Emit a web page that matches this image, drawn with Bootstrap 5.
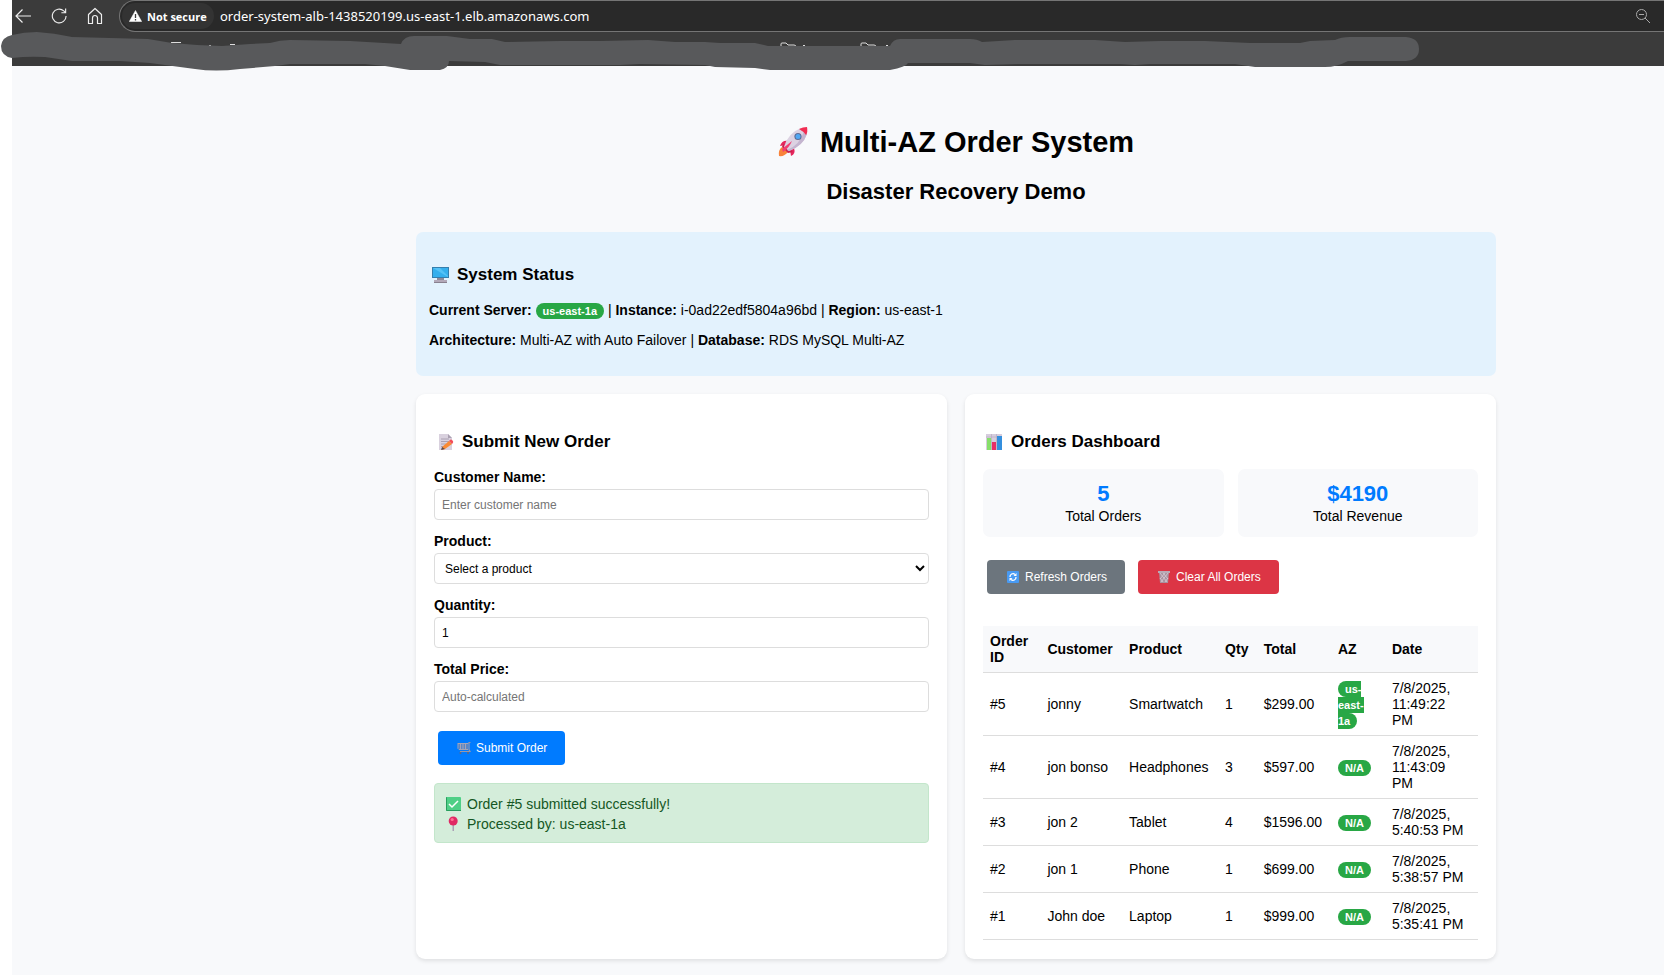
<!DOCTYPE html>
<html lang="en">
<head>
<meta charset="utf-8">
<meta name="viewport" content="width=device-width, initial-scale=1">
<title>Multi-AZ Order System</title>
<link href="https://cdn.jsdelivr.net/npm/bootstrap@5.3.0/dist/css/bootstrap.min.css" rel="stylesheet">
<style>
  body { font-family: "Liberation Sans", Arial, sans-serif; font-size: 14px; line-height: 17px; color: #000; background: #fff; overflow-x: hidden; }
  .window-area { margin-left: 12px; }
  h1, h2, h3 { font-weight: 700; margin: 0; }
  h1 { font-size: 29px; line-height: 34px; gap: 12px; }
  h2 { font-size: 22px; line-height: 25px; margin-top: 20px; }
  h3 { font-size: 17px; line-height: 20px; gap: 4px; }
  svg { flex: none; }

  /* browser bar */
  .browser-bar { background: #3b3b3b; height: 66px; font-family: "Open Sans", "Noto Sans", sans-serif; }
  .tool-buttons { width: 107px; padding-left: 2px; gap: 19px; height: 32px; }
  .tool-buttons button, .address-bar button { background: none; border: 0; padding: 0; display: flex; color: #fff; }
  .address-bar { background: #292929; border: 1px solid #757575; border-right: 0; border-radius: 16px 0 0 16px; height: 32px; padding: 0 13px 0 2px; }
  .address-bar .secure-chip { background: #333; border-radius: 13px; height: 26px; width: 92px; padding-left: 7px; gap: 5px; align-items: center; font-size: 11px; font-weight: 700; white-space: nowrap; }
  .address-bar input { background: none; border: 0; padding: 0 0 0 6px; color: #fff; font-family: "Noto Sans", sans-serif; font-size: 13px; outline: 0; min-width: 0; }
  .redaction { position: absolute; left: 0; top: 0; pointer-events: none; }

  /* page */
  .page-area { background: #f8f9fb; padding: 59px 0 15px; min-height: calc(100vh - 66px); }
  .space-start { flex: 101 1 0; }
  .space-end { flex: 42 1 0; }
  .order-app { flex: 0 1 1080px; min-width: 0; }
  .status-panel { background: #e3f2fd; border-radius: 7px; padding: 33px 13px 27px; margin: 28px 0 18px; }
  .status-panel p { margin: 0; padding-top: 13px; }
  .status-panel h3 { margin-bottom: 4px; }
  .panels { display: grid; grid-template-columns: 1fr 1fr; gap: 18px; }
  .panel { background: #fff; border-radius: 9px; padding: 38px 18px 19px; box-shadow: 0 2px 4px rgba(0,0,0,.1); min-width: 0; }
  .panel h3 { margin-bottom: 17px; }
  .az-pill { background: #28a745; color: #fff; border-radius: 11px; padding: 2px 7px; font-size: 11px; line-height: 11px; font-weight: 700; }

  .field { margin-bottom: 13px; }
  .field label { display: block; font-weight: 700; margin-bottom: 3px; }
  .field .form-control, .field .form-box { display: block; width: 100%; height: 31px; border: 1px solid #ddd; border-radius: 4px; padding: 7px; font-size: 12px; line-height: 15px; color: #000; background: #fff; }
  .field .form-box { padding: 6px; }
  .field .form-control::placeholder { color: #757575; }
  .action { border: 0; border-radius: 4px; color: #fff; font-size: 12px; line-height: 14px; padding: 10px 18px; display: inline-flex; align-items: center; gap: 4px; margin: 6px 4px 18px; }
  .action-blue { background: #007bff; }
  .action-gray { background: #6c757d; }
  .action-red { background: #dc3545; }
  .done-note { background: #d4edda; border: 1px solid #c3e6cb; border-radius: 4px; color: #155724; padding: 10px 9px 8px; line-height: 20px; margin: 0; }
  .done-note div { gap: 5px; }

  .stat-row { gap: 14px; }
  .stat-tile { background: #f8f9fb; border-radius: 7px; padding: 13px 14px 12px; text-align: center; flex: 1 1 0; }
  .stat-tile b { display: block; font-size: 22px; line-height: 24px; margin-bottom: 2px; color: #007bff; }
  .dash-actions { margin: 23px 0 32px; gap: 5px; }
  .dash-actions .action { margin: 0 4px; }

  .orders { width: 100%; table-layout: fixed; border-collapse: collapse; line-height: 16px; }
  .orders th, .orders td { padding: 7px; border-bottom: 1px solid #ddd; vertical-align: middle; }
  .orders th { background: #f8f9fb; }
  .orders .c-id { width: 11.6%; } .orders .c-name { width: 16.5%; } .orders .c-prod { width: 19.4%; }
  .orders .c-qty { width: 7.8%; } .orders .c-total { width: 15%; } .orders .c-az { width: 10.9%; }
  .orders td:last-child { padding-right: 12px; }
</style>
</head>
<body>
<div class="window-area">
  <header class="browser-bar">
    <div class="d-flex">
      <div class="tool-buttons d-flex align-items-center">
        <button aria-label="Back"><svg width="18" height="18" viewBox="0 0 18 18" fill="none" stroke="#eee" stroke-width="1.2"><path d="M17 9H2M8.500 2.500 2 9l6.500 6.500"/></svg></button>
        <button aria-label="Reload"><svg width="17" height="18" viewBox="0 0 18 18" fill="none" stroke="#eee" stroke-width="1.2"><path d="M16 9a7.300 7.300 0 1 1-2.500-5.500L15.500 5.500M15.500 1v4.500H11"/></svg></button>
        <button aria-label="Home"><svg width="16" height="18" viewBox="0 0 16 18" fill="none" stroke="#eee" stroke-width="1.2"><path d="M1.500 7.500 8 1.500l6.500 6v9H10.500V11a2.500 2.500 0 0 0-5 0v5.500h-4z" stroke-linejoin="round"/></svg></button>
      </div>
      <div class="address-bar d-flex align-items-center flex-grow-1">
        <button class="secure-chip d-flex"><svg width="13" height="12" viewBox="0 0 13 12"><path d="M6.500.5 12.700 11.500H.3z" fill="#fff" stroke="#fff" stroke-width=".5" stroke-linejoin="round"/><path d="M6.500 4v4M6.500 9v1.400" stroke="#3b3b3b" stroke-width="1.300"/></svg>Not secure</button>
        <input class="flex-grow-1" type="text" aria-label="Address" value="order-system-alb-1438520199.us-east-1.elb.amazonaws.com">
        <button aria-label="Zoom out"><svg width="16" height="16" viewBox="0 0 16 16" fill="none" stroke="#aaa"><circle cx="6.500" cy="6.500" r="5"/><path d="M10 10l5 5M4 6.500h5"/></svg></button>
      </div>
    </div>
    <!-- grey marker strokes hiding the bookmarks row -->
    <svg class="redaction" width="1424" height="76" viewBox="0 0 1424 76">
      <path d="M171 42.500h10M209 45.500h2M230 44.500h5M723 43.500h5M1254 43.500h4M803 45.500h2M886 45.500h2" stroke="#ddd" fill="none"/>
      <path d="M781 47v-3q0-1 1-1h4l2 2h6q2 0 2 2M861 47v-3q0-1 1-1h4l2 2h6q2 0 2 2" stroke="#ddd" fill="none"/>
      <path fill="#58595b" d="M12 35Q24 32 37 32Q54 33 72 37L110 38L148 39L172 43L197 45L222 46L250 44L270 43Q280 40 290 40L350 41L401 44Q404 36 414 36L447 36L470 39L492 39L505 42L560 41L600 41L648 40L675 42L705 42L720 43L755 43L768 46L890 46Q893 39 900 39L970 39Q977 39 982 42L1015 40L1095 40L1125 42L1160 41L1205 41L1250 43L1300 43L1310 41L1335 40Q1341 37 1350 37L1406 37Q1419 38 1419 49Q1419 60 1406 61L1348 61Q1337 67 1325 67L1255 67L1235 64L1150 64L1135 65L1120 64L1020 64L985 65L970 63L908 63Q906 67 890 70L770 70L755 68L715 67L705 65L640 64L620 65L500 65L485 62L449 61Q449 68 440 70L410 70L385 66L365 64L290 64L275 66L240 69Q215 72 195 69L150 63L120 61L72 61L45 57Q28 56 12 58Q1 56 1 46Q2 37 12 35Z"/>
    </svg>
  </header>

  <main class="page-area d-flex">
    <div class="space-start"></div>
    <div class="order-app">
      <h1 class="d-flex justify-content-center align-items-center">
        <svg width="30" height="30" viewBox="0 0 30 30"><path d="M4 20q-4 3-3 9 5 1 9-4z" fill="#f9833a"/><path d="M10 14q-6-1-8 5l6-1zM16 21q2 6-3 8l-1-6z" fill="#e5265c"/><path d="M5 17 15 25 10 26 4 20z" fill="#c9204e"/><path d="M6 20Q10 6 23 1l6 6Q25 19 11 24z" fill="#dcd2e2"/><path d="M9 23Q22 18 26 4l3 3Q25 19 11 24z" fill="#c4b5cf"/><path d="M21 2q4-2 8-2 1 5-1 8-3-4-7-6z" fill="#f12d52"/><circle cx="20" cy="9.500" r="3.600" fill="#596b96"/><circle cx="20" cy="9.500" r="2.500" fill="#50a7f3"/><path d="M4 22q5-4 10-8-3 7-9 11z" fill="#f13e71"/></svg>
        <span>Multi-AZ Order System</span>
      </h1>
      <h2 class="text-center">Disaster Recovery Demo</h2>

      <section class="status-panel">
        <h3 class="d-flex align-items-center">
          <svg width="24" height="20" viewBox="0 0 24 20"><path d="M3 2h17v11H3z" fill="#347fae"/><path d="M4 3h15v9H4z" fill="#35afed"/><path d="M4 3h7l8 8v1z" fill="#55c2f6"/><path d="M8 13h7v2H8z" fill="#918a98"/><path d="M5 15h13v3H5z" fill="#b3a9b9"/><path d="M5 17h13v1H5z" fill="#89818f"/></svg>
          System Status
        </h3>
        <p><strong>Current Server:</strong> <span class="az-pill">us-east-1a</span> | <strong>Instance:</strong> i-0ad22edf5804a96bd | <strong>Region:</strong> us-east-1</p>
        <p><strong>Architecture:</strong> Multi-AZ with Auto Failover | <strong>Database:</strong> RDS MySQL Multi-AZ</p>
      </section>

      <div class="panels">
        <section class="panel">
          <h3 class="d-flex align-items-center">
            <svg width="24" height="20" viewBox="0 0 24 20"><path d="M5 2h9l4 4v12H5z" fill="#d9d1de"/><path d="M14 2v4h4z" fill="#aaa0b1"/><path d="M7 7h8M7 9.500h8M7 12h5M7 14.500h3" stroke="#aaa0b2"/><path d="m8 15 7-6 3 3-7 5-3 1z" fill="#f98a35"/><path d="m15 9 1-1q1-1 2.500.5T18 12z" fill="#f34d59"/><path d="m8 15 3 2-4 1z" fill="#594c52"/></svg>
            Submit New Order
          </h3>
          <form>
            <div class="field"><label for="name">Customer Name:</label><input class="form-control" id="name" type="text" placeholder="Enter customer name"></div>
            <div class="field"><label for="product">Product:</label><select class="form-box" id="product"><option>Select a product</option><option>Laptop</option><option>Phone</option><option>Tablet</option><option>Headphones</option><option>Smartwatch</option></select></div>
            <div class="field"><label for="qty">Quantity:</label><input class="form-control" id="qty" type="text" inputmode="numeric" value="1"></div>
            <div class="field"><label for="price">Total Price:</label><input class="form-control" id="price" type="text" placeholder="Auto-calculated" readonly></div>
            <button class="action action-blue" type="button">
              <svg width="16" height="14" viewBox="0 0 16 14" fill="none"><path d="M2 2.500h10v6H3z" fill="#5b86c4"/><path d="M2 2.500h10.500M2 2v5.500l1 1h9M4.500 3v5M7 3v5M9.500 3v5" stroke="#a6a4b5"/><path d="M14.500 1.500h-1.500v7l1 2H4" stroke="#9a97a8" stroke-width="1.200"/><circle cx="4.500" cy="12" r="1" fill="#667"/><circle cx="12" cy="12" r="1" fill="#667"/></svg>Submit Order</button>
          </form>
          <div class="done-note" role="status">
            <div class="d-flex align-items-center"><svg width="18" height="20" viewBox="0 0 18 20"><rect x="2" y="3" width="15" height="14" rx="1" fill="#4fcf86"/><path d="M2 4v12q0 1 1 1h14v-1H3V3q-1 0-1 1z" fill="#279d5e"/><path d="m5 10 3 3 6-6" fill="none" stroke="#fff" stroke-width="1.500"/></svg>Order #5 submitted successfully!</div>
            <div class="d-flex align-items-center"><svg width="18" height="20" viewBox="0 0 18 20"><path d="M8.500 10h1.500v7H8.500z" fill="#aaa0b5"/><circle cx="9.200" cy="7" r="4.500" fill="#e02964"/><circle cx="8.200" cy="5.500" r="1.600" fill="#ff6e92"/></svg>Processed by: us-east-1a</div>
          </div>
        </section>

        <section class="panel">
          <h3 class="d-flex align-items-center">
            <svg width="24" height="20" viewBox="0 0 24 20"><path d="M3 2h16v16H3z" fill="#d6cddd"/><path d="M8.500 2v16M13.500 2v16M3 5h16" stroke="#b8aec0" stroke-width=".7"/><path d="M4 6h4v12H4z" fill="#87df6a"/><path d="M9 10h4v8H9z" fill="#e92e67"/><path d="M14 4h5v14h-5z" fill="#348fde"/></svg>
            Orders Dashboard
          </h3>
          <div class="stat-row d-flex">
            <div class="stat-tile"><b>5</b>Total Orders</div>
            <div class="stat-tile"><b>$4190</b>Total Revenue</div>
          </div>
          <div class="dash-actions d-flex">
            <button class="action action-gray" type="button"><svg width="16" height="14" viewBox="0 0 16 14"><rect x="2" y="1" width="12" height="12" rx="1" fill="#489af3"/><path d="M5 7a3 3 0 0 1 5-2.500M11 7a3 3 0 0 1-5 2.500" fill="none" stroke="#fff" stroke-width="1.300"/><path d="M11.500 3v3h-3zM4.500 11V8h3z" fill="#fff"/></svg>Refresh Orders</button>
            <button class="action action-red" type="button"><svg width="16" height="14" viewBox="0 0 16 14"><path d="M3 2h10l-1 11H4z" fill="#a9929f"/><path d="m4 3 7 9M7 3l5 6M4 8l3 4M12 3l-7 9M9 3 4 9M12 8l-3 4" stroke="#d8ccd5" stroke-width=".8"/><path d="M2 1h12v2H2z" fill="#b9abb6"/></svg>Clear All Orders</button>
          </div>
          <table class="orders">
            <thead><tr><th class="c-id">Order ID</th><th class="c-name">Customer</th><th class="c-prod">Product</th><th class="c-qty">Qty</th><th class="c-total">Total</th><th class="c-az">AZ</th><th>Date</th></tr></thead>
            <tbody>
              <tr><td>#5</td><td>jonny</td><td>Smartwatch</td><td>1</td><td>$299.00</td><td><span class="az-pill">us-east-1a</span></td><td>7/8/2025, 11:49:22 PM</td></tr>
              <tr><td>#4</td><td>jon bonso</td><td>Headphones</td><td>3</td><td>$597.00</td><td><span class="az-pill">N/A</span></td><td>7/8/2025, 11:43:09 PM</td></tr>
              <tr><td>#3</td><td>jon 2</td><td>Tablet</td><td>4</td><td>$1596.00</td><td><span class="az-pill">N/A</span></td><td>7/8/2025, 5:40:53 PM</td></tr>
              <tr><td>#2</td><td>jon 1</td><td>Phone</td><td>1</td><td>$699.00</td><td><span class="az-pill">N/A</span></td><td>7/8/2025, 5:38:57 PM</td></tr>
              <tr><td>#1</td><td>John doe</td><td>Laptop</td><td>1</td><td>$999.00</td><td><span class="az-pill">N/A</span></td><td>7/8/2025, 5:35:41 PM</td></tr>
            </tbody>
          </table>
        </section>
      </div>
    </div>
    <div class="space-end"></div>
  </main>
</div>
<script src="https://cdn.jsdelivr.net/npm/bootstrap@5.3.0/dist/js/bootstrap.bundle.min.js"></script>
</body>
</html>
